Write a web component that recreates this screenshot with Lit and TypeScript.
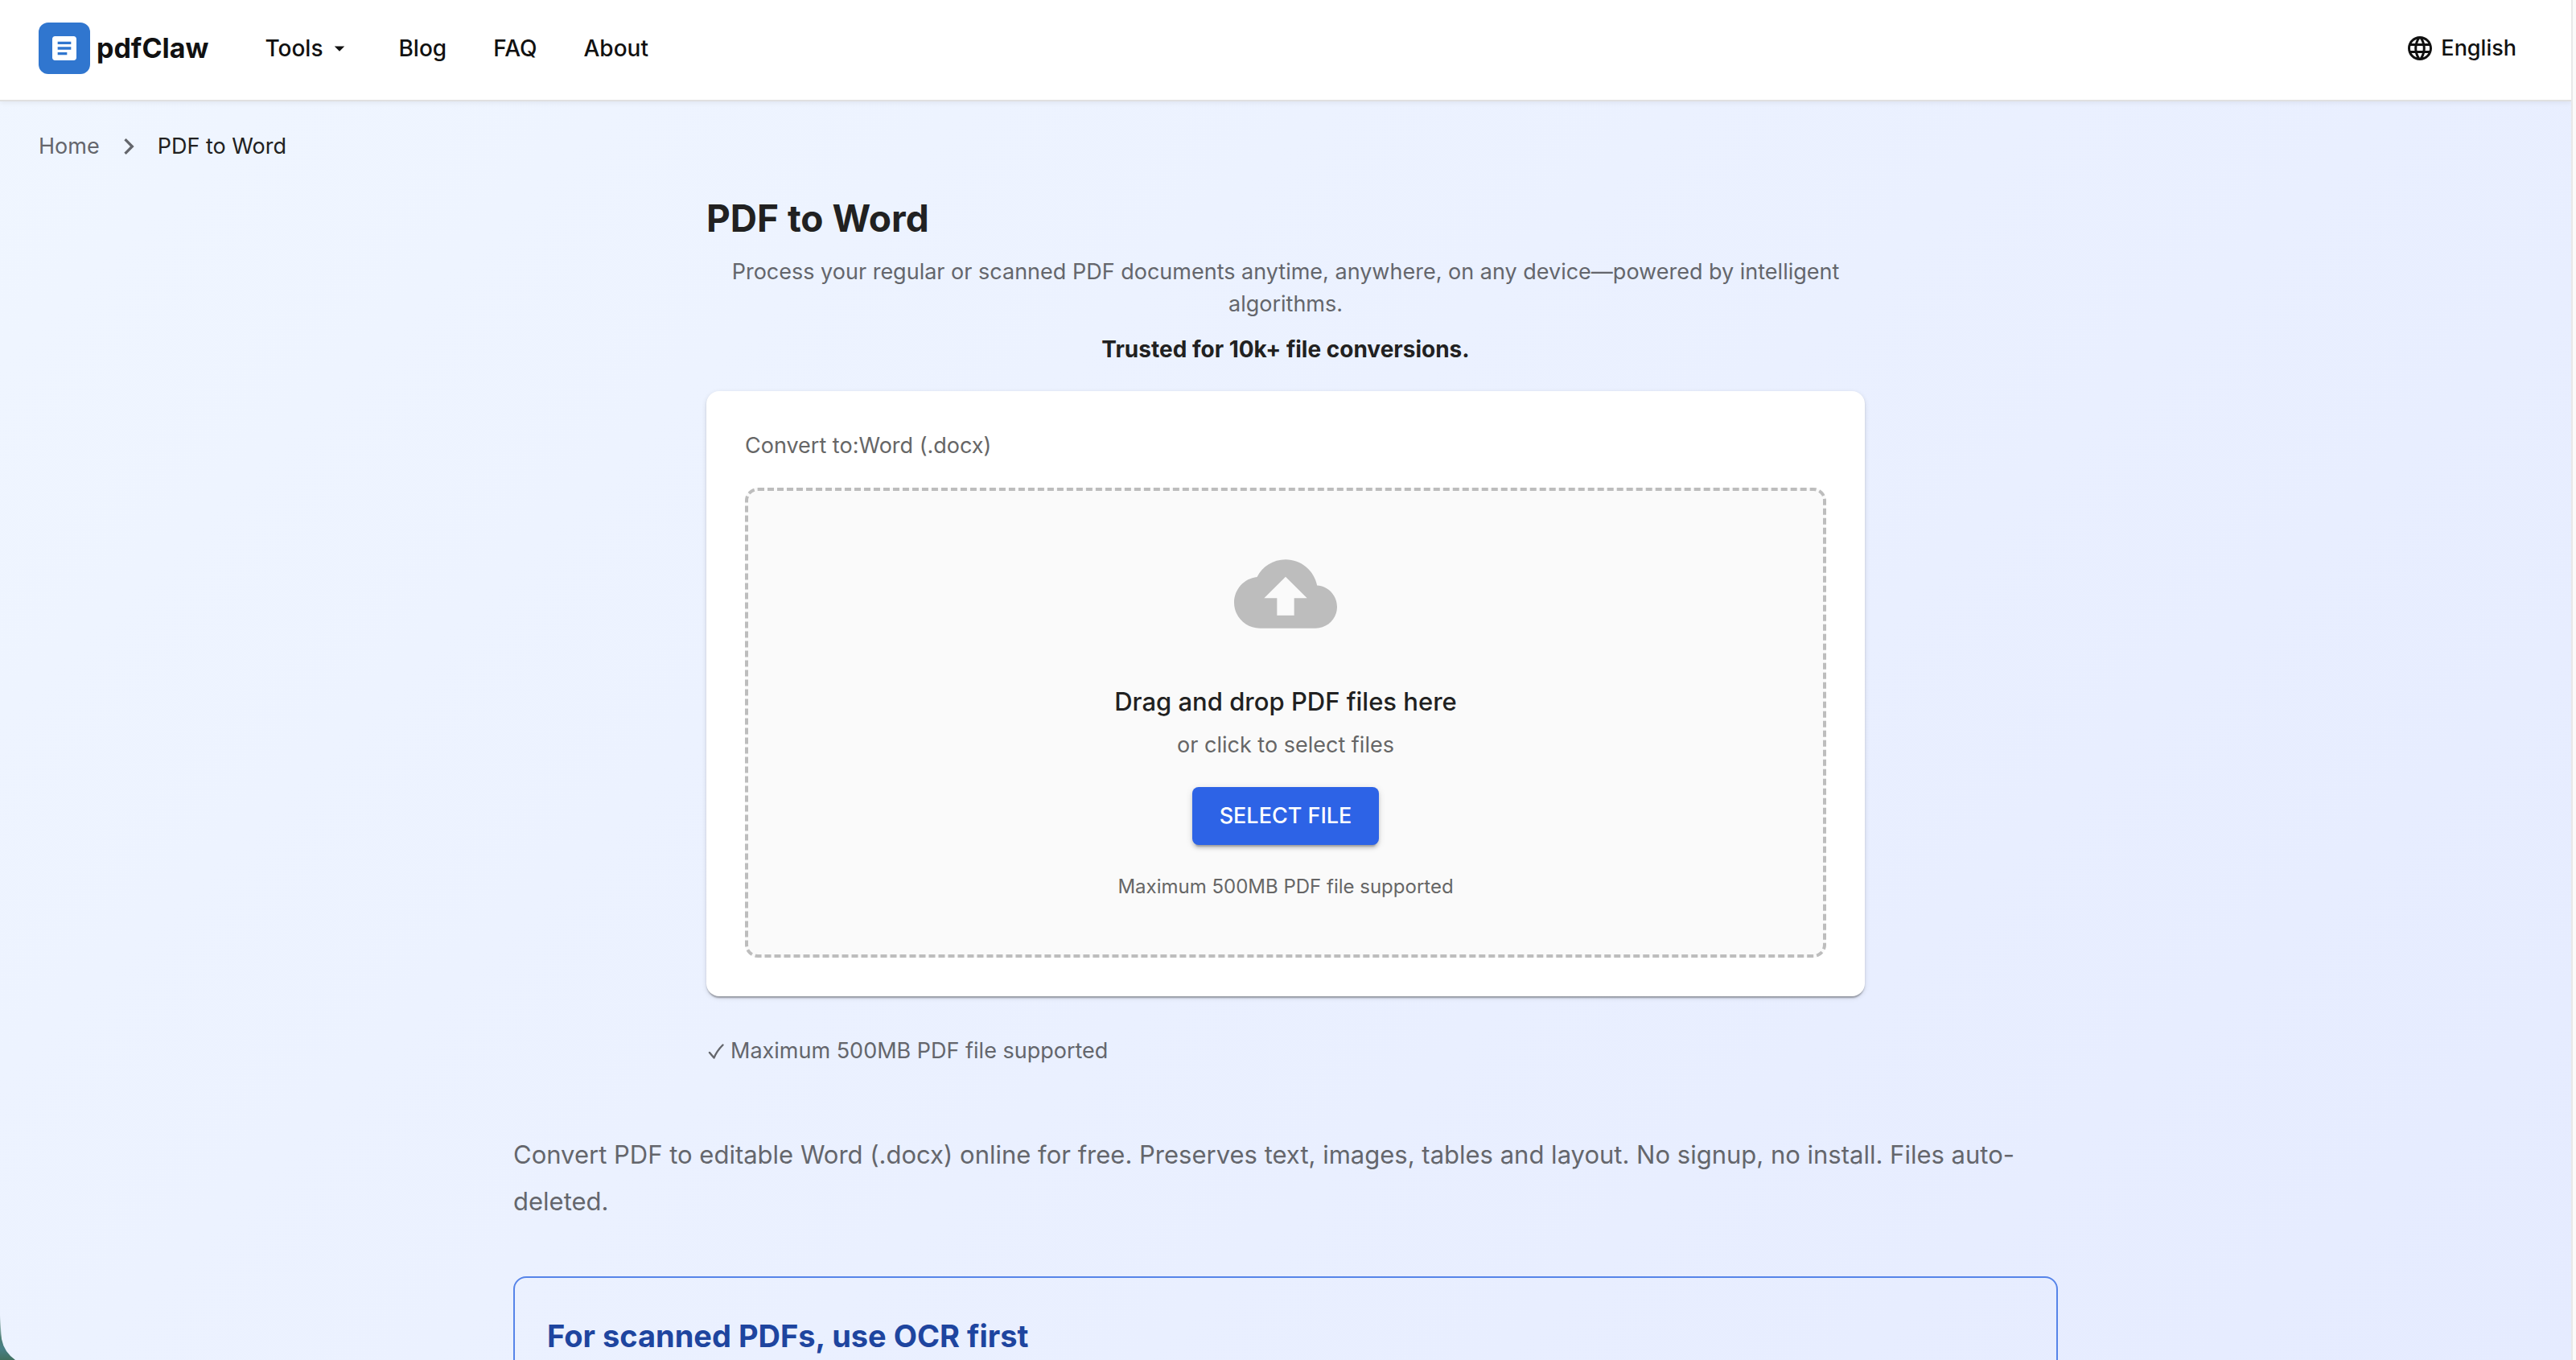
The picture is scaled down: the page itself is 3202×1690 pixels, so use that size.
import { LitElement, html, svg, css } from "lit";
import { customElement } from "lit/decorators.js";

const paths = {
  article: svg`<path d="M19 3H5c-1.1 0-2 .9-2 2v14c0 1.1.9 2 2 2h14c1.1 0 2-.9 2-2V5c0-1.1-.9-2-2-2zm-5 14H7v-2h7v2zm3-4H7v-2h10v2zm0-4H7V7h10v2z"/>`,
  caret: svg`<path d="M7 10l5 5 5-5z"/>`,
  globe: svg`<path d="M11.99 2C6.47 2 2 6.48 2 12s4.47 10 9.99 10C17.52 22 22 17.52 22 12S17.52 2 11.99 2zm6.93 6h-2.95c-.32-1.25-.78-2.45-1.38-3.56 1.84.63 3.37 1.91 4.33 3.56zM12 4.04c.83 1.2 1.48 2.53 1.91 3.96h-3.82c.43-1.43 1.08-2.76 1.91-3.96zM4.26 14C4.1 13.36 4 12.69 4 12s.1-1.36.26-2h3.38c-.08.66-.14 1.32-.14 2 0 .68.06 1.34.14 2H4.26zm.82 2h2.95c.32 1.25.78 2.45 1.38 3.56-1.84-.63-3.37-1.9-4.33-3.56zm2.95-8H5.08c.96-1.66 2.49-2.93 4.33-3.56C8.81 5.55 8.35 6.75 8.03 8zM12 19.96c-.83-1.2-1.48-2.53-1.91-3.96h3.82c-.43 1.43-1.08 2.76-1.91 3.96zM14.34 14H9.66c-.09-.66-.16-1.32-.16-2 0-.68.07-1.35.16-2h4.68c.09.65.16 1.32.16 2 0 .68-.07 1.34-.16 2zm.25 5.56c.6-1.11 1.06-2.31 1.38-3.56h2.95c-.96 1.65-2.49 2.93-4.33 3.56zM16.36 14c.08-.66.14-1.32.14-2 0-.68-.06-1.34-.14-2h3.38c.16.64.26 1.31.26 2s-.1 1.36-.26 2h-3.38z"/>`,
  next: svg`<path d="M10 6L8.59 7.41 13.17 12l-4.58 4.59L10 18l6-6z"/>`,
  cloud: svg`<path d="M19.35 10.04C18.67 6.59 15.64 4 12 4 9.11 4 6.6 5.64 5.35 8.04 2.34 8.36 0 10.91 0 14c0 3.31 2.69 6 6 6h13c2.76 0 5-2.24 5-5 0-2.64-2.05-4.78-4.65-4.96zM14 13v4h-4v-4H7l5-5 5 5h-3z"/>`,
};

const icon = (name: keyof typeof paths, cls: string) =>
  html`<svg class=${cls} viewBox="0 0 24 24" fill="currentColor" aria-hidden="true">${paths[name]}</svg>`;

@customElement("app-root")
export class AppRoot extends LitElement {
  static styles = css`
    :host {
      display: flex;
      position: relative;
      height: 100vh;
      overflow: hidden;
      font-family: Inter, "Liberation Sans", sans-serif;
      font-size: 27px;
      line-height: 40px;
      color: #212121;
    }
    * { box-sizing: border-box; }
    svg { display: block; flex: none; }
    h1, h2, p, ol { margin: 0; padding: 0; }
    a { color: inherit; text-decoration: none; }
    button { font: inherit; color: inherit; border: 0; background: none; padding: 0; cursor: pointer; }

    .page {
      flex: 1;
      min-width: 0;
      background: linear-gradient(135deg, #f0f6ff 0%, #e5ebff 100%);
    }
    .gutter { flex: none; width: 6px; background: #fafafa; border-left: 2px solid #e8e8e8; }

    .header {
      display: flex;
      align-items: center;
      padding: 28px 68px 32px 48px;
      background: #fff;
      color: #111;
      border-bottom: 2px solid #e0e0e0;
      box-shadow: 0 2px 6px rgba(0, 0, 0, 0.06);
    }
    .brand { display: flex; align-items: center; gap: 8px; font-size: 34px; font-weight: 700; }
    .logo {
      display: grid;
      place-items: center;
      width: 64px;
      height: 64px;
      border-radius: 12px;
      background: #3076cf;
      color: #fff;
    }
    .logo-icon { width: 40px; height: 40px; }
    .nav { display: flex; gap: 58px; margin-left: 70px; font-size: 28px; font-weight: 500; }
    .menu { display: flex; align-items: center; gap: 6px; }
    .caret { width: 30px; height: 30px; }
    .language { display: flex; align-items: center; gap: 8px; margin-left: auto; font-weight: 500; }
    .globe { width: 36px; height: 36px; }

    .crumbs { display: flex; align-items: center; gap: 16px; padding: 36px 48px 0; list-style: none; }
    .crumb-link { color: #64666c; }
    .chevron { width: 40px; height: 40px; color: #64666c; }

    .converter { width: min(1440px, 100% - 96px); margin: 40px auto 0; }
    .title { font-size: 46px; line-height: 58px; font-weight: 700; }
    .subtitle { margin-top: 18px; text-align: center; color: #64666c; }
    .trusted { margin-top: 16px; text-align: center; font-size: 28px; font-weight: 700; }
    .card {
      margin-top: 32px;
      padding: 48px;
      border-radius: 16px;
      background: #fff;
      box-shadow: 0 4px 2px -2px rgba(0, 0, 0, 0.2), 0 2px 2px rgba(0, 0, 0, 0.14), 0 2px 6px rgba(0, 0, 0, 0.12);
    }
    .target { color: #666; }
    .drop {
      display: flex;
      flex-direction: column;
      align-items: center;
      margin-top: 32px;
      padding: 64px;
      border: 4px dashed #bdbdbd;
      border-radius: 16px;
      background: #fafafa;
    }
    .cloud { width: 128px; height: 128px; color: #bdbdbd; }
    .drop-title { margin-top: 48px; font-size: 31px; line-height: 44px; font-weight: 500; }
    .drop-hint { margin-top: 12px; color: #666; }
    .select {
      margin-top: 32px;
      padding: 16px 34px;
      border-radius: 8px;
      background: #2d63e6;
      color: #fff;
      font-weight: 500;
      box-shadow: 0 6px 2px -4px rgba(0, 0, 0, 0.2), 0 4px 4px rgba(0, 0, 0, 0.14), 0 2px 10px rgba(0, 0, 0, 0.12);
    }
    .limit { margin-top: 32px; font-size: 24px; color: #666; }
    .note { display: flex; align-items: center; gap: 8px; margin-top: 48px; color: #64666c; }
    .check { width: 22px; height: 24px; }

    .about { width: min(1920px, 100% - 96px); margin: 80px auto 0; }
    .lead { font-size: 31px; line-height: 58px; color: #64666c; }
    .tip { margin-top: 64px; padding: 40px; border: 2px solid #5684e9; border-radius: 16px; }
    .tip-title { font-size: 38px; line-height: 64px; font-weight: 700; color: #1e459f; }

    .corner { position: absolute; left: 0; bottom: 0; width: 20px; height: 60px; }
  `;

  render() {
    return html`
      <div class="page">
        <header class="header">
          <a class="brand" href="#"><span class="logo">${icon("article", "logo-icon")}</span>pdfClaw</a>
          <nav class="nav">
            <button class="menu" type="button">Tools${icon("caret", "caret")}</button>
            <a href="#blog">Blog</a>
            <a href="#faq">FAQ</a>
            <a href="#about">About</a>
          </nav>
          <button class="language" type="button">${icon("globe", "globe")}English</button>
        </header>
        <nav aria-label="Breadcrumb">
          <ol class="crumbs">
            <li><a class="crumb-link" href="#">Home</a></li>
            <li aria-hidden="true">${icon("next", "chevron")}</li>
            <li aria-current="page">PDF to Word</li>
          </ol>
        </nav>
        <main>
          <section class="converter">
            <h1 class="title">PDF to Word</h1>
            <p class="subtitle">Process your regular or scanned PDF documents anytime, anywhere, on any device—powered by intelligent algorithms.</p>
            <p class="trusted">Trusted for 10k+ file conversions.</p>
            <div class="card">
              <p class="target">Convert to:Word (.docx)</p>
              <div class="drop">
                ${icon("cloud", "cloud")}
                <p class="drop-title">Drag and drop PDF files here</p>
                <p class="drop-hint">or click to select files</p>
                <button class="select" type="button">SELECT FILE</button>
                <p class="limit">Maximum 500MB PDF file supported</p>
              </div>
            </div>
            <p class="note">
              <svg class="check" viewBox="0 0 22 24" fill="none" stroke="currentColor" stroke-width="2.4" stroke-linecap="round" stroke-linejoin="round" aria-hidden="true"><path d="M4 14L9.5 20.5Q13 12 20.5 4.5"/></svg>
              Maximum 500MB PDF file supported
            </p>
          </section>
          <section class="about">
            <p class="lead">Convert PDF to editable Word (.docx) online for free. Preserves text, images, tables and layout. No signup, no install. Files auto-deleted.</p>
            <div class="tip"><h2 class="tip-title">For scanned PDFs, use OCR first</h2></div>
          </section>
        </main>
      </div>
      <div class="gutter"></div>
      <svg class="corner" viewBox="0 0 20 60" aria-hidden="true">
        <defs>
          <linearGradient id="desk" x1="0" y1="0" x2="0" y2="1">
            <stop offset="0" stop-color="#8fb0ad" stop-opacity="0.4" />
            <stop offset="0.5" stop-color="#4c7d74" />
            <stop offset="0.75" stop-color="#477f86" />
            <stop offset="1" stop-color="#41705f" />
          </linearGradient>
        </defs>
        <path d="M0 4C1 16 1 26 2 34Q5 50 19 60H0Z" fill="url(#desk)" />
      </svg>
    `;
  }
}
